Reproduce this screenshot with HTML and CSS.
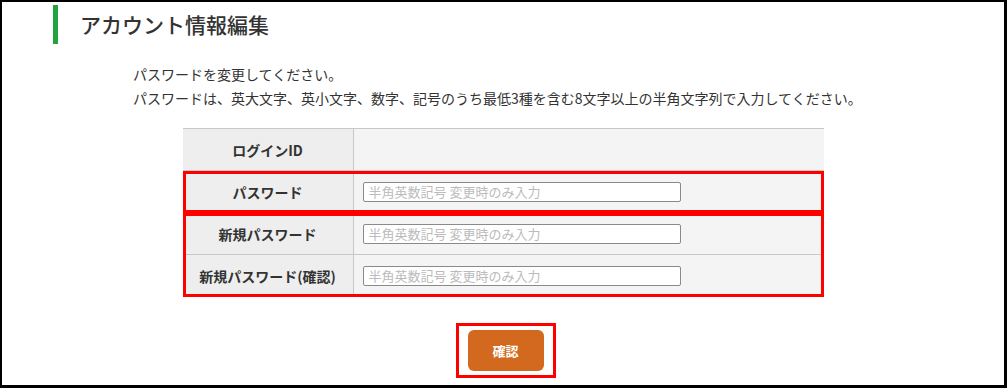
FILE: index.html
```html
<!DOCTYPE html>
<html lang="ja">
<head>
    <meta charset="UTF-8">
    <meta name="viewport" content="width=device-width, initial-scale=1.0">
    <title>アカウント情報編集</title>
    <link rel="stylesheet" href="styles.css">
</head>
<body>
    <div class="frame">
        <h1 class="page-title">アカウント情報編集</h1>

        <div class="lead">
            <p>パスワードを変更してください。</p>
            <p>パスワードは、英大文字、英小文字、数字、記号のうち最低3種を含む8文字以上の半角文字列で入力してください。</p>
        </div>

        <form class="account-form" onsubmit="return false">
            <div class="form-table">
                <div class="row">
                    <div class="label">ログインID</div>
                    <div class="value"></div>
                </div>
                <div class="row highlight">
                    <div class="label">パスワード</div>
                    <div class="value">
                        <input type="password" class="text-input" placeholder="半角英数記号 変更時のみ入力">
                    </div>
                </div>
                <div class="highlight">
                    <div class="row">
                        <div class="label">新規パスワード</div>
                        <div class="value">
                            <input type="password" class="text-input" placeholder="半角英数記号 変更時のみ入力">
                        </div>
                    </div>
                    <div class="row">
                        <div class="label">新規パスワード(確認)</div>
                        <div class="value">
                            <input type="password" class="text-input" placeholder="半角英数記号 変更時のみ入力">
                        </div>
                    </div>
                </div>
            </div>

            <div class="actions">
                <span class="btn-mark">
                    <button type="submit" class="confirm-button">確認</button>
                </span>
            </div>
        </form>
    </div>
</body>
</html>
```

FILE: styles.css
```css
* {
    margin: 0;
    padding: 0;
    box-sizing: border-box;
}

body {
    font-family: "Noto Sans CJK JP", "Noto Sans", sans-serif;
    color: #333;
    background: #fff;
}

.frame {
    width: 1007px;
    height: 388px;
    border-style: solid;
    border-color: #000;
    border-width: 2px 3px 3px 2px;
    overflow: hidden;
}

.page-title {
    margin: 3px 0 0 51px;
    height: 39px;
    border-left: 5px solid #21a33f;
    padding-left: 22px;
    font-size: 21px;
    font-weight: 500;
    line-height: 39px;
    color: #333;
}

.lead {
    width: 740px;
    margin: 18px auto 0;
    font-size: 14px;
    line-height: 24px;
}

.form-table {
    width: 641px;
    margin: 18px auto 0;
    border-top: 1px solid #c8c8c8;
}

.row {
    display: grid;
    grid-template-columns: 171px 1fr;
    height: 42px;
    border-bottom: 1px solid #c8c8c8;
}

.label {
    display: flex;
    align-items: center;
    justify-content: center;
    background: #eee;
    border-right: 1px solid #c8c8c8;
    font-size: 14px;
    font-weight: bold;
}

.value {
    display: flex;
    align-items: center;
    padding-left: 9px;
    background: #f4f4f4;
}

.text-input {
    width: 318px;
    height: 20px;
    padding: 0 5px;
    border: 1px solid #8a8a8a;
    border-radius: 2px;
    background: #fff;
    font-family: inherit;
    font-size: 13px;
    color: #333;
}

.text-input::placeholder {
    color: #bbb;
}

/* red marks around the changed fields */
.highlight {
    outline: 3px solid #f00;
    outline-offset: -3px;
}

.actions {
    margin-top: 26px;
    text-align: center;
}

.btn-mark {
    display: inline-block;
    margin-left: 5px;
    border: 3px solid #f00;
    padding: 4px 9px;
    line-height: 0;
}

.confirm-button {
    width: 76px;
    height: 41px;
    border: none;
    border-radius: 6px;
    background: #d2691e;
    color: #fff;
    font-family: inherit;
    font-size: 13px;
    font-weight: bold;
    cursor: pointer;
}
```
